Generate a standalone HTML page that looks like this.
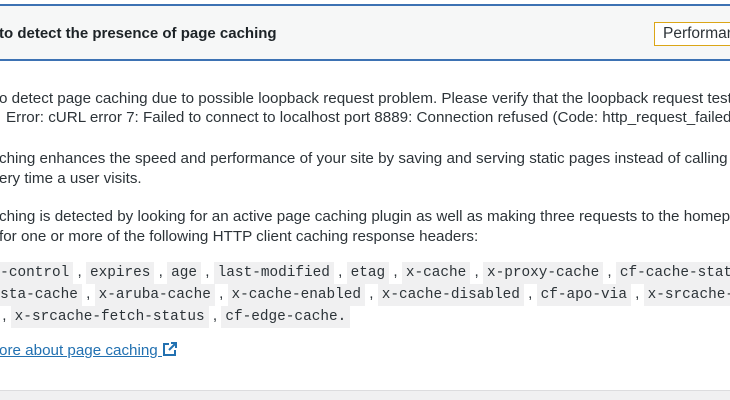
<!DOCTYPE html>
<html><head><meta charset="utf-8"><style>
html,body{margin:0;padding:0;width:730px;height:400px;overflow:hidden;background:#fff;font-family:"Liberation Sans",sans-serif;color:#2c3338}
.wrap{position:absolute;left:0;top:0;width:730px;height:400px;overflow:hidden}
.hdr{position:absolute;left:0;top:4px;width:730px;height:53px;background:#f6f7f7;border-top:2px solid #3d72b3;border-bottom:2px solid #3d72b3;overflow:hidden}
.ht{position:absolute;left:-1px;top:19px;font-size:15px;font-weight:bold;color:#1d2327;white-space:nowrap}
.btn{position:absolute;left:654px;top:16px;width:90px;height:22px;border:1px solid #dba617;background:#fff;font-size:15.5px;line-height:22px;padding-left:8px;color:#2c3338;white-space:nowrap;overflow:hidden}
.l{position:absolute;white-space:nowrap;font-size:15.2px;line-height:20px}
code{font-family:"Liberation Mono",monospace;font-size:14.4px;background:#f0f0f1;padding:3px 4px}
a{color:#2271b1}
.bot{position:absolute;left:0;top:390px;width:730px;height:10px;background:#f0f0f1;border-top:1px solid #dcdcde}
</style></head><body><div class="wrap">
<div class="hdr"><div class="ht">to detect the presence of page caching</div><div class="btn">Performance</div></div>
<div class="l" style="left:-1px;top:89px">o detect page caching due to possible loopback request problem. Please verify that the loopback request test</div>
<div class="l" style="left:6px;top:108px">Error: cURL error 7: Failed to connect to localhost port 8889: Connection refused (Code: http_request_failed)</div>
<div class="l" style="left:-1px;top:149px">ching enhances the speed and performance of your site by saving and serving static pages instead of calling</div>
<div class="l" style="left:-1px;top:169px">ery time a user visits.</div>
<div class="l" style="left:-1px;top:207px">ching is detected by looking for an active page caching plugin as well as making three requests to the homepage</div>
<div class="l" style="left:-1px;top:227px">for one or more of the following HTTP client caching response headers:</div>
<div class="l" style="left:-47px;top:262px"><code>cache-control</code> , <code>expires</code> , <code>age</code> , <code>last-modified</code> , <code>etag</code> , <code>x-cache</code> , <code>x-proxy-cache</code> , <code>cf-cache-status</code></div>
<div class="l" style="left:-47px;top:284px"><code>x-kinsta-cache</code> , <code>x-aruba-cache</code> , <code>x-cache-enabled</code> , <code>x-cache-disabled</code> , <code>cf-apo-via</code> , <code>x-srcache-store-status</code></div>
<div class="l" style="left:-200px;top:306px"><code>x-srcache-store-status</code> , <code>x-srcache-fetch-status</code> , <code>cf-edge-cache.</code></div>
<div class="l" style="left:-1px;top:341px"><a href="#">ore about page caching <svg width="16" height="16" viewBox="0 0 16 16" style="vertical-align:-2px"><path d="M7 3H2v11h11V9M9 2h5v5M14 2L7 9" fill="none" stroke="#2271b1" stroke-width="2"/></svg></a></div>
<div class="bot"></div>
</div></body></html>
